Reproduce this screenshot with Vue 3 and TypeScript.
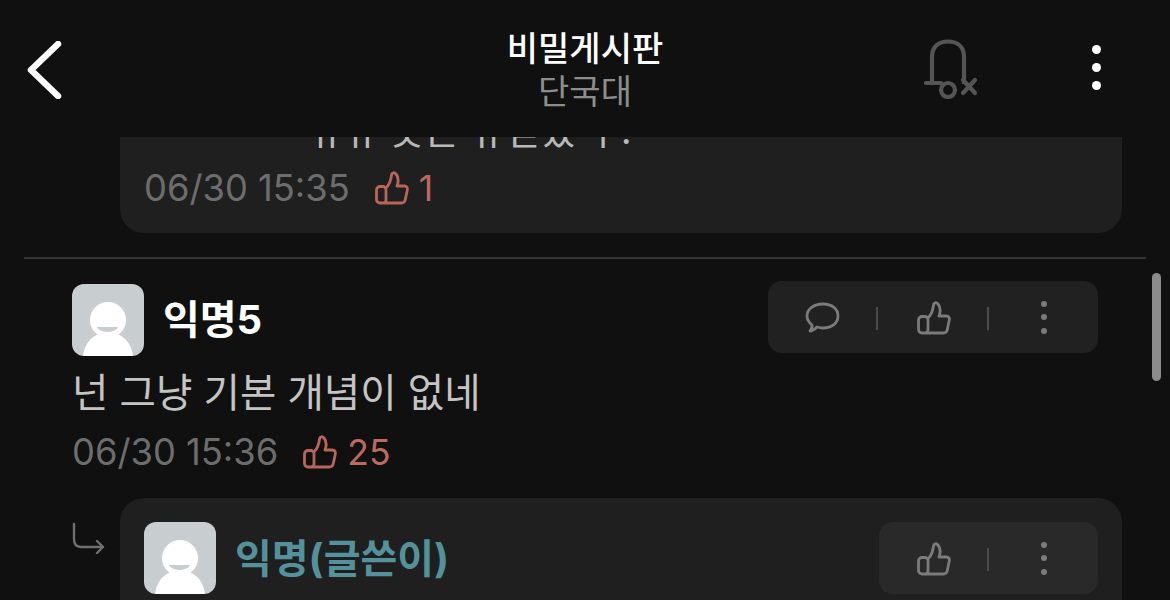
<script setup lang="ts">
const thumb = "M10 32 H6 a3.5 3.5 0 0 1 -3.5 -3.5 V19 a3.5 3.5 0 0 1 3.5 -3.5 H9 a3 3 0 0 1 3 3 V29 a3 3 0 0 1 -3 3 M12 17 C15 14 17 9 17.5 4 C17.8 1.4 20.5 1 22 3 C24.5 6 24.5 11 23 15 H30.5 C32.5 15 33.8 16.8 33.3 19 L31.2 29 C30.8 31 29.2 32 27.2 32 H10"
const ticks = [0, 1, 2]
</script>

<template>
  <div class="page">
    <header class="top">
      <svg class="back" width="36" height="58" viewBox="0 0 36 58" fill="none">
        <path d="M31 3 L4 29 L31 55" stroke="#fff" stroke-width="6.5" stroke-linecap="round" stroke-linejoin="round" />
      </svg>
      <div class="heading">
        <div class="title">비밀게시판</div>
        <div class="school">단국대</div>
      </div>
      <svg class="bell" width="56" height="60" viewBox="0 0 56 60" fill="none" stroke="#555" stroke-width="4.2">
        <path d="M8 44 V18 C8 8 14 2.5 24 2.5 C34 2.5 40 8 40 18 V45" />
        <path d="M2 44 H17" stroke-linecap="round" />
        <circle cx="24" cy="51" r="7" />
        <path d="M39 41 L51 54 M51 41 L39 54" stroke-linecap="round" />
      </svg>
      <div class="more">
        <span v-for="t in ticks" :key="t"></span>
      </div>
    </header>

    <main class="feed">
      <section class="first-reply">
        <p class="clipped">뉴뉴 옷은 뉴믿었 구.</p>
        <div class="meta">
          <span class="time">06/30 15:35</span>
          <svg class="up" width="36" height="34" viewBox="0 0 36 34" fill="none"><path :d="thumb" stroke="#b9665a" stroke-width="2.8" stroke-linejoin="round" /></svg>
          <span class="count">1</span>
        </div>
      </section>

      <hr class="rule" />

      <article class="comment">
        <div class="row">
          <div class="avatar">
            <svg width="72" height="72" viewBox="0 0 72 72">
              <ellipse cx="36" cy="74" rx="25" ry="26" fill="#fff" />
              <circle cx="36" cy="36" r="18" fill="#fff" />
              <path d="M25 43 H46 C43 49.5 28 49.5 25 43 Z" fill="#c8cdd0" />
            </svg>
          </div>
          <strong class="name">익명5</strong>
          <div class="tools">
            <svg class="bubble" width="36" height="32" viewBox="0 0 36 32" fill="none" stroke="#7b7b7b" stroke-width="2.8" stroke-linejoin="round">
              <path d="M18 2 C27 2 33 7 33 14 C33 21 27 26 18 26 C15.5 26 14 25.6 12 25 C10 27 7.5 29 5 29 C6.6 27 7.4 24.5 7 23 C4 20.5 2 18 2 14 C2 7 9 2 18 2 Z" />
            </svg>
            <i class="sep"></i>
            <svg class="like" width="36" height="34" viewBox="0 0 36 34" fill="none"><path :d="thumb" stroke="#7b7b7b" stroke-width="2.8" stroke-linejoin="round" /></svg>
            <i class="sep"></i>
            <div class="dots"><span v-for="t in ticks" :key="t"></span></div>
          </div>
        </div>
        <p class="body">넌 그냥 기본 개념이 없네</p>
        <div class="meta">
          <span class="time">06/30 15:36</span>
          <svg class="up" width="36" height="34" viewBox="0 0 36 34" fill="none"><path :d="thumb" stroke="#b9665a" stroke-width="2.8" stroke-linejoin="round" /></svg>
          <span class="count">25</span>
        </div>
      </article>

      <section class="thread">
        <svg class="arrow" width="34" height="32" viewBox="0 0 34 32" fill="none" stroke="#6f6f6f" stroke-width="2.4" stroke-linecap="round" stroke-linejoin="round">
          <path d="M2 2 V17 C2 22 4 25 9 25 H31 M25 19 L31 25 L25 31" />
        </svg>
        <div class="reply">
          <div class="avatar">
            <svg width="72" height="72" viewBox="0 0 72 72">
              <ellipse cx="36" cy="74" rx="25" ry="26" fill="#fff" />
              <circle cx="36" cy="36" r="18" fill="#fff" />
              <path d="M25 43 H46 C43 49.5 28 49.5 25 43 Z" fill="#c8cdd0" />
            </svg>
          </div>
          <strong class="name author">익명(글쓴이)</strong>
          <div class="tools small">
            <svg class="like" width="36" height="34" viewBox="0 0 36 34" fill="none"><path :d="thumb" stroke="#7b7b7b" stroke-width="2.8" stroke-linejoin="round" /></svg>
            <i class="sep"></i>
            <div class="dots"><span v-for="t in ticks" :key="t"></span></div>
          </div>
        </div>
      </section>
    </main>

    <div class="scrollbar"></div>
  </div>
</template>

<style>
html, body { margin: 0; background: #101010; }
</style>

<style scoped>
.page {
  position: relative;
  width: 1170px;
  height: 600px;
  overflow: hidden;
  display: flex;
  flex-direction: column;
  background: #101010;
  font-family: Inter, "Noto Sans CJK KR", sans-serif;
}
.top {
  flex: none;
  height: 137px;
  display: flex;
  align-items: center;
  position: relative;
  background: #101010;
}
.back { margin: 3px 0 0 27px; }
.heading {
  position: absolute;
  left: 0;
  right: 0;
  top: 27px;
  text-align: center;
}
.title { font-size: 34px; font-weight: 500; line-height: 43px; color: #fff; }
.school { font-size: 34px; font-weight: 400; line-height: 44px; color: #8d8d8d; }
.bell { margin-left: auto; margin-right: 112px; }
.more { display: flex; flex-direction: column; gap: 9px; margin-right: 69px; margin-top: -3px; }
.more span { width: 9px; height: 9px; border-radius: 50%; background: #fff; }
.feed { flex: 1; min-height: 0; overflow: hidden; }
.first-reply {
  margin: -34px 48px 0 120px;
  background: #1f1f1f;
  border-radius: 0 0 24px 24px;
  padding: 0 24px 25px;
}
.clipped {
  margin: 0;
  padding-left: 165px;
  font-size: 38px;
  line-height: 54px;
  color: #b8b8b8;
  white-space: nowrap;
}
.meta { display: flex; align-items: center; height: 40px; }
.first-reply .meta { margin-top: 11px; }
.time { font-size: 36.3px; color: #6d6d6d; }
.up { margin-left: 24px; margin-right: 9px; }
.count { font-size: 35.5px; color: #bd6a5c; }
.rule { border: 0; height: 2px; margin: 24px 24px 0; background: #343434; }
.comment { padding: 25px 72px 0; }
.row { display: flex; align-items: center; height: 72px; }
.avatar { flex: none; width: 72px; height: 72px; border-radius: 12px; overflow: hidden; background: #c8cdd0; }
.avatar svg { display: block; }
.name { margin-left: 19px; font-size: 40px; font-weight: 700; line-height: 74px; color: #fff; }
.author { color: #53929b; }
.tools {
  margin-left: auto;
  margin-top: -6px;
  width: 330px;
  height: 72px;
  box-sizing: border-box;
  background: #212121;
  border-radius: 14px;
  display: flex;
  align-items: center;
  justify-content: flex-end;
  gap: 37px;
  padding: 2px 51px 0 0;
}
.bubble { margin-right: -2px; }
.like { margin: 0 -2px 0 1px; }
.sep { width: 2px; height: 23px; background: #4a4a4a; }
.dots { display: flex; flex-direction: column; gap: 7.5px; margin: -2px 0 0 15px; }
.dots span { width: 6px; height: 6px; border-radius: 50%; background: #7b7b7b; }
.body { margin: 10px 0 0; font-size: 39.6px; line-height: 54px; color: #c4c4c4; white-space: nowrap; }
.comment .meta { margin-top: 12px; }
.thread { display: flex; margin-top: 26px; padding-left: 72px; }
.arrow { flex: none; margin-top: 24px; margin-right: 14px; }
.reply {
  width: 1002px;
  height: 130px;
  box-sizing: border-box;
  padding: 24px 24px 0;
  background: #1f1f1f;
  border-radius: 24px 24px 0 0;
  display: flex;
  align-items: flex-start;
}
.small {
  width: 219px;
  margin-top: 0;
  background: #292929;
}
.scrollbar {
  position: absolute;
  left: 1152px;
  top: 273px;
  width: 9px;
  height: 108px;
  border-radius: 5px;
  background: #8c8c8c;
}
</style>
